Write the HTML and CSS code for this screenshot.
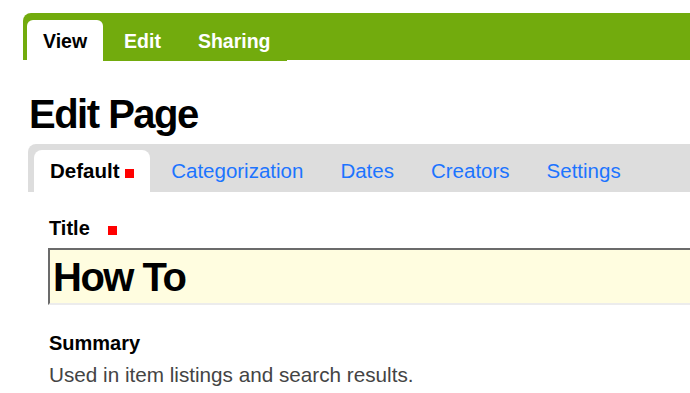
FILE: index.html
```html
<!DOCTYPE html>
<html lang="en">

<head>
    <meta charset="UTF-8">
    <meta name="viewport" content="width=device-width, initial-scale=1.0">
    <title>Edit Page</title>
    <link rel="stylesheet" href="styles.css">
</head>

<body>
    <div class="page">
        <div class="topbar">
            <ul class="viewtabs">
                <li class="current">View</li>
                <li>Edit</li>
                <li>Sharing</li>
            </ul>
        </div>

        <h1>Edit Page</h1>

        <ul class="formtabs">
            <li class="current">Default <span class="required"></span></li>
            <li>Categorization</li>
            <li>Dates</li>
            <li>Creators</li>
            <li>Settings</li>
        </ul>

        <div class="field">
            <label>Title <span class="required"></span></label>
            <div class="textfield">How To</div>
        </div>

        <div class="field summary">
            <label>Summary</label>
            <div class="help">Used in item listings and search results.</div>
        </div>
    </div>
</body>

</html>
```

FILE: styles.css
```css
body {
    font-family: "Liberation Sans", Arial, sans-serif;
    background-color: #fff;
    color: #000;
    margin: 0;
    padding: 0;
}

.page {
    width: 690px;
    height: 393px;
    overflow: hidden;
}

ul {
    list-style: none;
    margin: 0;
    padding: 0;
}

/* green view/edit bar */
.topbar {
    margin: 13px 0 0 23px;
    height: 40px;
    padding: 7px 0 0 4px;
    background-color: #72ab0d;
    border-top-left-radius: 8px;
}

.viewtabs {
    display: inline-flex;
    gap: 5px;
    height: 41px;
    background-color: #72ab0d;
}

.viewtabs li {
    padding: 1px 16px 0;
    line-height: 40px;
    font-size: 19.5px;
    font-weight: bold;
    color: #fff;
}

.viewtabs li.current {
    background-color: #fff;
    color: #000;
    border-radius: 6px 6px 0 0;
}

h1 {
    margin: 30px 0 6px 29px;
    font-size: 40px;
    line-height: 48px;
    letter-spacing: -1.5px;
}

/* grey fieldset tabs */
.formtabs {
    display: flex;
    gap: 5px;
    margin-left: 28px;
    padding: 6px 0 0 6px;
    height: 42px;
    background-color: #dddddd;
    border-top-left-radius: 8px;
}

.formtabs li {
    padding: 0 16px;
    line-height: 42px;
    font-size: 20.5px;
    color: #1c74ff;
}

.formtabs li.current {
    background-color: #fff;
    color: #000;
    font-weight: bold;
    border-radius: 8px 8px 0 0;
}

.required {
    display: inline-block;
    width: 9px;
    height: 9px;
    background-color: #f00;
}

.field {
    margin: 24px 0 0 49px;
}

.field label {
    display: block;
    font-size: 20px;
    font-weight: bold;
    line-height: 24px;
}

.field label .required {
    margin-left: 13px;
}

.textfield {
    margin: 8px 0 0 -1px;
    width: 700px;
    height: 51px;
    padding: 2px 0 0 3px;
    background-color: #fffde0;
    border-top: 2px solid #6b6b6b;
    border-left: 2px solid #6b6b6b;
    border-bottom: 2px solid #ececec;
    font-size: 40px;
    font-weight: bold;
    line-height: 51px;
    letter-spacing: -1.5px;
}

.summary {
    margin-top: 26px;
}

.help {
    margin-top: 8px;
    font-size: 20.7px;
    line-height: 24px;
    color: #444;
}
```
